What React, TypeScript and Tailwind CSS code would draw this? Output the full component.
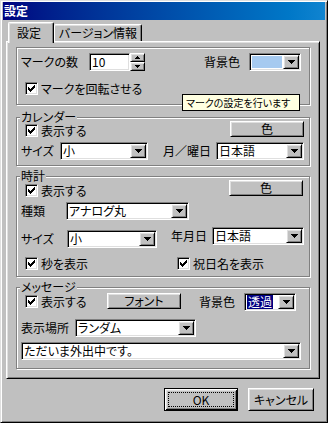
import { ReactNode } from "react";

const raised =
  "border border-t-white border-l-white border-r-black border-b-black bg-[#c0c0c0] shadow-[inset_1px_1px_0_#dfdfdf,inset_-1px_-1px_0_#808080]";
const sunken =
  "border border-t-[#808080] border-l-[#808080] border-r-white border-b-white shadow-[inset_1px_1px_0_#000,inset_-1px_-1px_0_#dfdfdf]";

const Arrow = () => (
  <svg width="7" height="4" viewBox="0 0 7 4" shapeRendering="crispEdges">
    <path d="M0 0h7v1H0zM1 1h5v1H1zM2 2h3v1H2zM3 3h1v1H3z" fill="#000" />
  </svg>
);

const SmallArrow = ({ up = false }: { up?: boolean }) => (
  <svg width="5" height="3" viewBox="0 0 5 3" shapeRendering="crispEdges" className={up ? "rotate-180" : ""}>
    <path d="M0 0h5v1H0zM1 1h3v1H1zM2 2h1v1H2z" fill="#000" />
  </svg>
);

const Check = () => (
  <span className={`${sunken} bg-white w-[13px] h-[13px] flex items-center justify-center shrink-0`}>
    <svg width="7" height="7" viewBox="0 0 7 7" shapeRendering="crispEdges">
      <path d="M6 0h1v1H6zM5 1h2v1H5zM0 2h1v1H0zM4 2h3v1H4zM0 3h2v1H0zM3 3h3v1H3zM0 4h5v1H0zM1 5h3v1H1zM2 6h1v1H2z" fill="#000" />
    </svg>
  </span>
);

function CheckLabel({ children }: { children: ReactNode }) {
  return (
    <div className="flex items-center gap-[3px] whitespace-nowrap">
      <Check />
      <span className="leading-[13px]">{children}</span>
    </div>
  );
}

function Combo({ className, children }: { className: string; children?: ReactNode }) {
  return (
    <div className={`${sunken} bg-white h-[18px] p-[1px] flex shrink-0 ${className}`}>
      <div className="flex-1 flex items-center pl-[1px] whitespace-nowrap leading-[14px]">{children}</div>
      <div className={`${raised} w-[16px] h-full flex items-center justify-center`}>
        <Arrow />
      </div>
    </div>
  );
}

function Btn({ className, children }: { className: string; children: ReactNode }) {
  return <div className={`${raised} flex items-center justify-center leading-[14px] shrink-0 ${className}`}>{children}</div>;
}

function Group({ label, className, children }: { label?: string; className: string; children: ReactNode }) {
  return (
    <div className={`relative w-[294px] border border-[#808080] shadow-[inset_1px_1px_0_#fff,1px_1px_0_#fff] ${className}`}>
      {label && (
        <span className="absolute left-[3px] -top-[7px] bg-[#c0c0c0] px-[1px] leading-[12px]">{label}</span>
      )}
      {children}
    </div>
  );
}

const Label = ({ className, children }: { className: string; children: ReactNode }) => (
  <span className={`leading-[14px] whitespace-nowrap shrink-0 ${className}`}>{children}</span>
);

export default function App() {
  return (
    <div className="relative w-[328px] h-[423px] bg-[#c0c0c0] border border-t-[#dfdfdf] border-l-[#dfdfdf] border-r-black border-b-black shadow-[inset_1px_1px_0_#fff,inset_-1px_-1px_0_#808080] pt-[1px] px-[2px] text-[12px] text-black font-['Noto_Sans_CJK_JP',sans-serif] [font-feature-settings:'palt'] select-none">
      {/* title bar */}
      <div className="h-[18px] bg-linear-to-r from-[#000080] to-[#1084d0] flex items-center pl-[1px]">
        <span className="text-white font-bold leading-[14px]">設定</span>
      </div>

      {/* tabs */}
      <div className="relative z-10 ml-[3px] mt-[2px] h-[19px] flex items-start">
        <div className="ml-[2px] w-[46px] h-[21px] bg-[#c0c0c0] border-t border-l border-r border-t-white border-l-white border-r-black rounded-t-[2px] shadow-[inset_-1px_0_0_#808080,inset_1px_1px_0_#dfdfdf] flex justify-center pt-[3px] pr-[4px] leading-[14px]">
          設定
        </div>
        <div className="mt-[2px] w-[88px] h-[17px] border-t border-l border-r border-t-white border-l-white border-r-black rounded-t-[2px] shadow-[inset_-1px_0_0_#808080,inset_0_1px_0_#dfdfdf] flex justify-center pt-[1px] leading-[14px]">
          バージョン情報
        </div>
      </div>

      {/* tab panel */}
      <div className={`${raised} ml-[3px] w-[314px] h-[338px] pl-[9px] pt-[5px]`}>
        <Group className="h-[58px]">
          <div className="mt-[5px] h-[18px] flex items-center pl-[4px]">
            <Label className="w-[68px]">マークの数</Label>
            <div className={`${sunken} bg-white w-[41px] h-[18px] flex items-center pl-[2px] leading-[14px]`}>10</div>
            <div className="w-[15px] h-[18px] flex flex-col">
              <div className={`${raised} h-[9px] flex items-center justify-center`}>
                <SmallArrow up />
              </div>
              <div className={`${raised} h-[9px] flex items-center justify-center`}>
                <SmallArrow />
              </div>
            </div>
            <Label className="ml-[59px] w-[36px]">背景色</Label>
            <div className={`${sunken} ml-[9px] bg-white w-[52px] h-[18px] p-[1px] flex`}>
              <div className="flex-1 p-[1px]">
                <div className="h-full bg-[#a6caf0]" />
              </div>
              <div className={`${raised} w-[16px] h-full flex items-center justify-center`}>
                <Arrow />
              </div>
            </div>
          </div>
          <div className="mt-[11px] pl-[8px]">
            <CheckLabel>マークを回転させる</CheckLabel>
          </div>
        </Group>

        <Group label="カレンダー" className="mt-[12px] h-[49px]">
          <div className="mt-[3px] h-[16px] flex items-end pl-[8px]">
            <CheckLabel>表示する</CheckLabel>
            <Btn className="ml-auto mr-[5px] w-[74px] h-[16px]">色</Btn>
          </div>
          <div className="mt-[5px] h-[18px] flex items-center pl-[4px]">
            <Label className="w-[39px]">サイズ</Label>
            <Combo className="w-[88px]">小</Combo>
            <Label className="ml-[15px] w-[48px]">月／曜日</Label>
            <Combo className="ml-[5px] w-[88px]">日本語</Combo>
          </div>
        </Group>

        <Group label="時計" className="mt-[10px] h-[101px]">
          <div className="mt-[3px] h-[16px] flex items-start">
            <div className="mt-[4px] pl-[8px]">
              <CheckLabel>表示する</CheckLabel>
            </div>
            <Btn className="ml-auto mr-[6px] w-[74px] h-[16px]">色</Btn>
          </div>
          <div className="mt-[6px] h-[18px] flex items-center pl-[4px]">
            <Label className="w-[45px]">種類</Label>
            <Combo className="w-[123px]">アナログ丸</Combo>
          </div>
          <div className="mt-[7px] h-[18px] flex items-start pl-[4px]">
            <div className="mt-[3px] flex items-center">
              <Label className="w-[46px]">サイズ</Label>
              <Combo className="w-[90px]">小</Combo>
            </div>
            <Label className="ml-[14px] w-[36px] mt-[2px]">年月日</Label>
            <Combo className="ml-[5px] w-[92px]">日本語</Combo>
          </div>
          <div className="mt-[12px] flex items-center pl-[8px]">
            <div className="w-[152px]">
              <CheckLabel>秒を表示</CheckLabel>
            </div>
            <CheckLabel>祝日名を表示</CheckLabel>
          </div>
        </Group>

        <Group label="メッセージ" className="mt-[10px] h-[82px]">
          <div className="mt-[5px] h-[18px] flex items-start pl-[8px]">
            <div className="mt-[2px] w-[82px]">
              <CheckLabel>表示する</CheckLabel>
            </div>
            <Btn className="w-[74px] h-[16px]">フォント</Btn>
            <Label className="ml-[18px] w-[36px] mt-[2px]">背景色</Label>
            <Combo className="ml-[9px] w-[52px]">
              <span className="bg-[#000080] text-white px-[1px]">透過</span>
            </Combo>
          </div>
          <div className="mt-[8px] h-[18px] flex items-center pl-[4px]">
            <Label className="w-[54px]">表示場所</Label>
            <Combo className="w-[121px]">ランダム</Combo>
          </div>
          <div className="mt-[5px] pl-[4px]">
            <Combo className="w-[280px]">ただいま外出中です。</Combo>
          </div>
        </Group>
      </div>

      {/* buttons */}
      <div className="mt-[9px] flex">
        <div className="ml-[161px] w-[74px] h-[23px] border border-black bg-[#c0c0c0] shadow-[inset_1px_1px_0_#fff,inset_-1px_-1px_0_#000,inset_2px_2px_0_#dfdfdf,inset_-2px_-2px_0_#808080] p-[3px]">
          <div className="h-full border border-dotted border-black flex items-center justify-center leading-[14px]">OK</div>
        </div>
        <Btn className="ml-[10px] w-[66px] h-[23px]">キャンセル</Btn>
      </div>

      {/* tooltip */}
      <div className="absolute left-[181px] top-[93px] z-20 w-[118px] h-[17px] bg-[#ffffe1] border border-black flex items-center pl-[3px] text-[10px] leading-[12px] whitespace-nowrap">
        マークの設定を行います
      </div>
    </div>
  );
}
